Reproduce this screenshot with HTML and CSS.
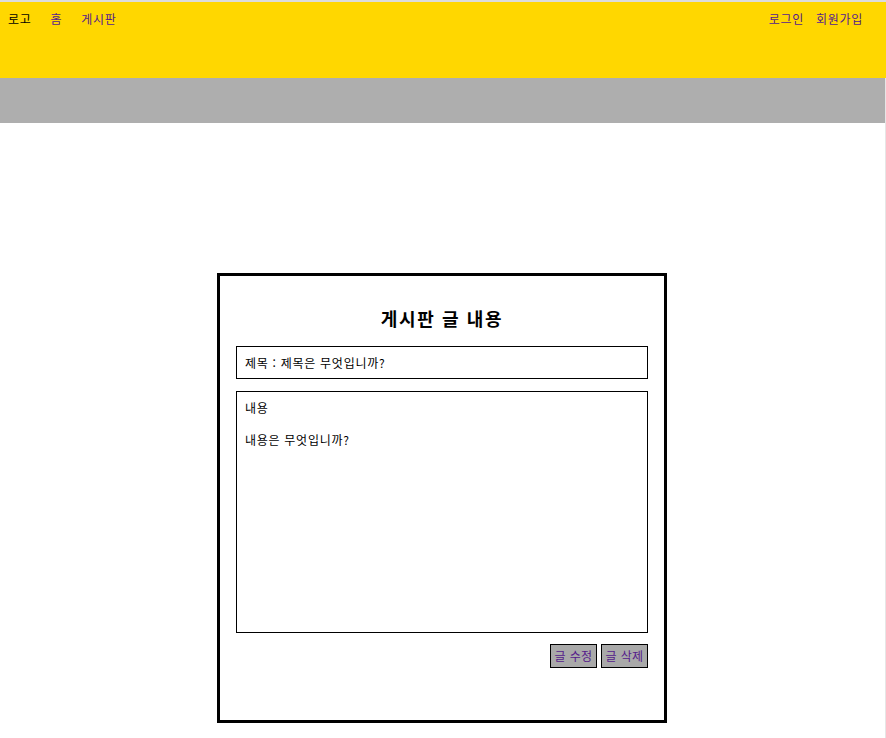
FILE: index.html
```html
<!DOCTYPE html>
<html lang="ko">
<head>
<meta charset="utf-8">
<title>게시판 글 내용</title>
<link rel="stylesheet" href="styles.css">
</head>
<body>
<header class="topbar">
  <nav class="nav-left">
    <span class="logo">로고</span>
    <a class="nav-link" href="#">홈</a>
    <a class="nav-link" href="#">게시판</a>
  </nav>
  <nav class="nav-right">
    <a class="nav-link" href="#">로그인</a>
    <a class="nav-link" href="#">회원가입</a>
  </nav>
</header>
<div class="page">
  <div class="band"></div>
  <main class="main">
    <section class="card">
      <h2 class="card-title">게시판 글 내용</h2>
      <div class="field-title">제목 : 제목은 무엇입니까?</div>
      <div class="field-content">
        <div class="content-label">내용</div>
        <p class="content-text">내용은 무엇입니까?</p>
      </div>
      <div class="actions">
        <a class="btn" href="#">글 수정</a>
        <a class="btn" href="#">글 삭제</a>
      </div>
    </section>
  </main>
</div>
</body>
</html>
```

FILE: styles.css
```css
html, body {
  margin: 0;
  padding: 0;
}
body {
  font-family: "Noto Sans CJK KR", "Noto Sans", sans-serif;
  font-size: 12px;
  line-height: 17px;
  letter-spacing: 0.06em;
  color: #000;
  background: #fff;
  border-top: 2px solid #dcdcdc;
}
.topbar {
  background: #ffd700;
  height: 76px;
  box-sizing: border-box;
  padding: 8px 23px 0 8px;
  display: flex;
  justify-content: space-between;
  align-items: flex-start;
}
.nav-left, .nav-right {
  display: flex;
}
.nav-left {
  gap: 19px;
}
.nav-right {
  gap: 12px;
}
.nav-link {
  color: #551a8b;
  text-decoration: none;
}
.page {
  border-right: 1px solid #e6e6e6;
  min-height: 660px;
}
.band {
  background: #aeaeae;
  height: 45px;
}
.main {
  padding: 150px 1px 0 0;
}
.card {
  margin: 0 auto;
  border: 3px solid #000;
  padding: 16px;
  width: 412px;
  height: 412px;
}
.card-title {
  margin: 15px 0 17px;
  font-size: 18px;
  line-height: 22px;
  font-weight: bold;
  text-align: center;
  letter-spacing: 0.09em;
}
.field-title {
  border: 1px solid #000;
  padding: 7px 8px;
}
.field-content {
  margin-top: 12px;
  border: 1px solid #000;
  height: 240px;
}
.content-label {
  padding: 7px 8px 0;
}
.content-text {
  margin: 15px 0 0;
  padding: 0 8px;
}
.actions {
  margin-top: 11px;
  display: flex;
  justify-content: flex-end;
  gap: 4px;
}
.btn {
  display: inline-block;
  background: #a9a9a9;
  border: 1px solid #000;
  color: #551a8b;
  text-decoration: none;
  padding: 3px 0;
  line-height: 16px;
  width: 45px;
  text-align: center;
  letter-spacing: 0.03em;
}
```
